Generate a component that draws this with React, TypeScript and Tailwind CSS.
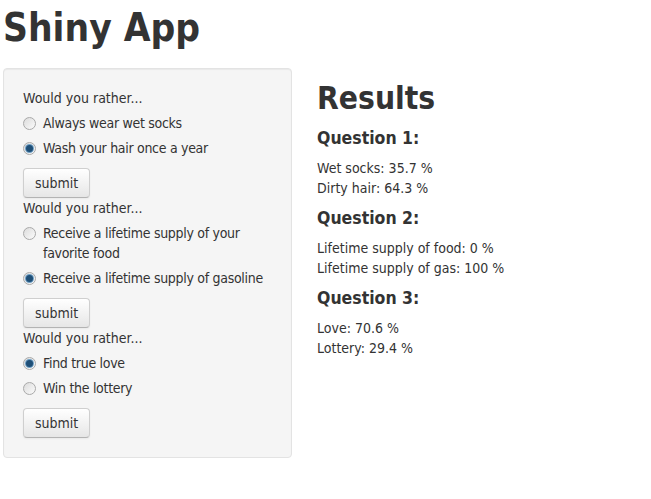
import React from 'react';

const font = { fontFamily: '"DejaVu Sans Condensed", Tahoma, "Liberation Sans", sans-serif' };

interface Option {
  label: string;
  checked?: boolean;
}

interface Question {
  options: Option[];
}

const questions: Question[] = [
  { options: [{ label: 'Always wear wet socks' }, { label: 'Wash your hair once a year', checked: true }] },
  {
    options: [
      { label: 'Receive a lifetime supply of your favorite food' },
      { label: 'Receive a lifetime supply of gasoline', checked: true },
    ],
  },
  { options: [{ label: 'Find true love', checked: true }, { label: 'Win the lottery' }] },
];

const results = [
  { title: 'Question 1:', lines: ['Wet socks: 35.7 %', 'Dirty hair: 64.3 %'] },
  { title: 'Question 2:', lines: ['Lifetime supply of food: 0 %', 'Lifetime supply of gas: 100 %'] },
  { title: 'Question 3:', lines: ['Love: 70.6 %', 'Lottery: 29.4 %'] },
];

function Radio({ checked }: { checked?: boolean }) {
  return (
    <span className="absolute left-0 top-[4px] flex h-[13px] w-[13px] items-center justify-center rounded-full border border-[#a9a9a9] bg-gradient-to-br from-[#dcdcdc] to-[#fbfbfb]">
      {checked && (
        <span className="h-[7px] w-[7px] rounded-full bg-[#1e4f77] shadow-[0_0_0_1px_#6d9ec4]" />
      )}
    </span>
  );
}

function QuestionGroup({ question }: { question: Question }) {
  return (
    <div>
      <div className="mb-[5px] leading-5">Would you rather...</div>
      {question.options.map((opt) => (
        <label key={opt.label} className="relative mb-[5px] block pl-5 leading-5 tracking-[-0.3px]">
          <Radio checked={opt.checked} />
          {opt.label}
        </label>
      ))}
      <button className="mt-[5px] h-[30px] rounded-[4px] border border-[#cfcfcf] border-b-[#b3b3b3] bg-gradient-to-b from-white to-[#e6e6e6] px-[11px] text-[#333] shadow-[inset_0_1px_0_rgba(255,255,255,.2),0_1px_2px_rgba(0,0,0,.05)]">
        submit
      </button>
    </div>
  );
}

export default function App() {
  return (
    <div className="min-h-[499px] bg-white px-[3px] text-[14px] text-[#333]" style={font}>
      <h1 className="pt-[8px] text-[38.5px] font-bold leading-10 text-[#333]">Shiny App</h1>

      <div className="mt-[20px] flex items-start gap-[25px]">
        {/* Sidebar */}
        <div className="w-[289px] rounded-[4px] border border-[#e3e3e3] bg-[#f5f5f5] p-[19px] shadow-[inset_0_1px_1px_rgba(0,0,0,.05)]">
          {questions.map((q, i) => (
            <QuestionGroup key={i} question={q} />
          ))}
        </div>

        {/* Main panel */}
        <div className="flex-1">
          <h2 className="mt-[10px] text-[31.5px] font-bold leading-10">Results</h2>
          {results.map((r) => (
            <div key={r.title}>
              <h4 className="mb-[10px] mt-[10px] text-[17.5px] font-bold leading-5">{r.title}</h4>
              {r.lines.map((line) => (
                <div key={line} className="leading-5">
                  {line}
                </div>
              ))}
            </div>
          ))}
        </div>
      </div>
    </div>
  );
}
